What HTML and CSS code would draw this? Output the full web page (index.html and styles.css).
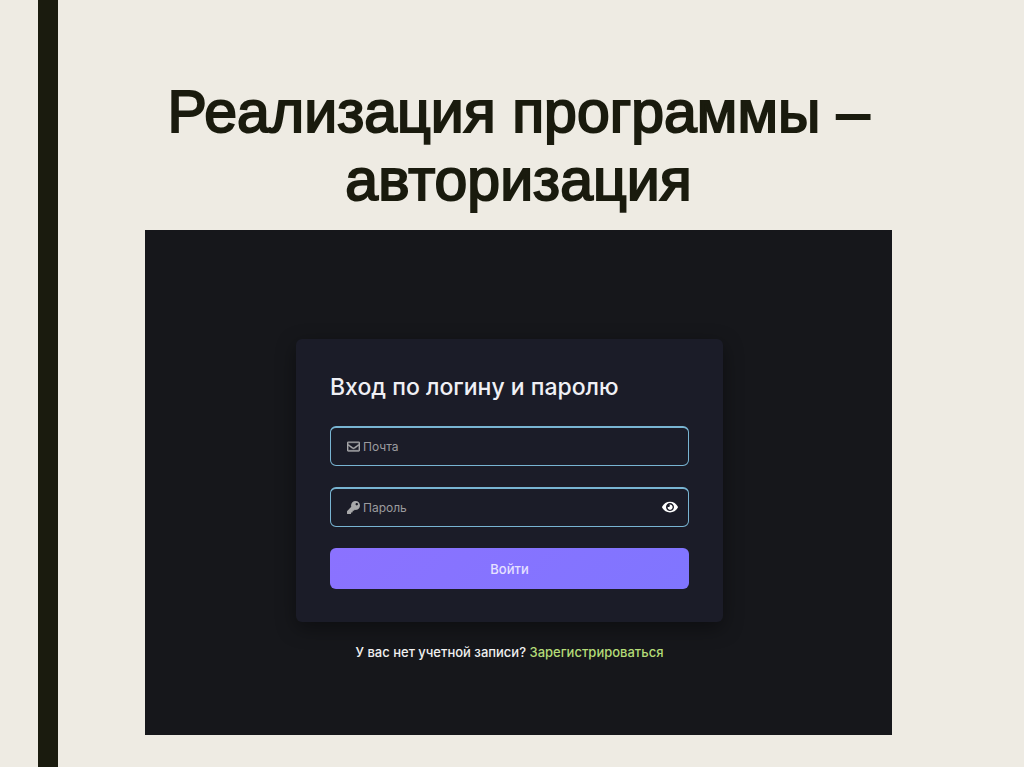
FILE: index.html
```html
<!DOCTYPE html>
<html lang="ru">
<head>
    <meta charset="UTF-8">
    <meta name="viewport" content="width=device-width, initial-scale=1.0">
    <title>Реализация программы – авторизация</title>
    <link rel="stylesheet" href="styles.css">
</head>
<body>
    <div class="stripe"></div>
    <main class="slide">
        <h1 class="slide-title">Реализация программы – авторизация</h1>

        <section class="screen">
            <form class="card">
                <h2>Вход по логину и паролю</h2>

                <div class="field">
                    <label for="email" aria-label="Почта">
                        <svg class="icon" viewBox="0 0 512 512" fill="currentColor" stroke="currentColor" stroke-width="14">
                            <path d="M464 64H48C21 64 0 86 0 112v288c0 27 21 48 48 48h416c27 0 48-21 48-48V112c0-26-21-48-48-48zm0 48v41c-22 18-58 46-135 107-17 13-50 45-73 44-23 1-56-31-73-44C106 199 70 171 48 153v-41h416zM48 400V215c23 18 55 43 105 83 23 18 62 54 103 54 41 0 80-36 103-54 50-40 82-65 105-83v185H48z"/>
                        </svg>
                    </label>
                    <input type="email" id="email" placeholder="Почта">
                </div>

                <div class="field">
                    <label for="password" aria-label="Пароль">
                        <svg class="icon" viewBox="0 0 512 512" fill="currentColor">
                            <path d="M512 176c0 97-79 176-176 176-11 0-22-1-32-3l-24 27c-5 5-11 8-18 8h-38v40c0 13-11 24-24 24h-40v40c0 13-11 24-24 24H24c-13 0-24-11-24-24v-78c0-6 3-12 7-17l162-162c-6-17-9-36-9-55C160 79 239 0 336 0c97 0 176 79 176 176zm-176-48c0 27 21 48 48 48s48-21 48-48-21-48-48-48-48 21-48 48z"/>
                        </svg>
                    </label>
                    <input type="password" id="password" placeholder="Пароль">
                    <button type="button" class="toggle" aria-label="Показать пароль">
                        <svg viewBox="0 0 576 512" fill="currentColor">
                            <path fill-rule="evenodd" d="M572 241C518 136 411 64 288 64S58 136 4 241c-5 9-5 21 0 30 54 105 161 177 284 177s230-72 284-177c5-9 5-21 0-30zM288 400c-80 0-144-64-144-144s64-144 144-144 144 64 144 144-64 144-144 144z"/>
                            <path d="M288 160c-9 0-17 1-25 4 22 16 25 46 10 67s-46 25-67 10c-18 67 38 111 82 111 53 0 96-43 96-96s-43-96-96-96z"/>
                        </svg>
                    </button>
                </div>

                <button type="submit" class="btn">Войти</button>
            </form>

            <p class="signup">У вас нет учетной записи? <a href="#">Зарегистрироваться</a></p>
        </section>
    </main>
</body>
</html>
```
FILE: styles.css
```css
* {
    margin: 0;
    padding: 0;
    box-sizing: border-box;
}

body {
    display: flex;
    min-height: 100vh;
    background: #eeebe3;
    font-family: Inter, sans-serif;
}

.stripe {
    width: 20px;
    margin-left: 38px;
    background: #1a1b0e;
    flex-shrink: 0;
}

.slide {
    flex: 1;
    padding: 78px 132px 32px 87px;
}

.slide-title {
    color: #1a1b0e;
    font-family: "Liberation Sans", Arial, sans-serif;
    font-size: 59px;
    font-weight: 400;
    line-height: 68px;
    text-align: center;
    -webkit-text-stroke: 2px #1a1b0e;
    margin-bottom: 16px;
}

.screen {
    display: flex;
    flex-direction: column;
    align-items: center;
    padding: 109px 18px 73px 0;
    background: #16171b;
}

.card {
    width: 100%;
    max-width: 427px;
    padding: 34px 34px 33px;
    background: #1b1c28;
    border-radius: 6px;
    box-shadow: 0 6px 20px rgba(0, 0, 0, 0.4);
}

.card h2 {
    color: #f0f0f5;
    font-size: 23px;
    font-weight: 500;
    line-height: 28px;
    margin-bottom: 25px;
}

.field {
    display: flex;
    align-items: center;
    gap: 3px;
    height: 40px;
    padding: 0 10px 0 16px;
    margin-bottom: 21px;
    border: 1px solid #78b4d2;
    border-top-width: 2px;
    border-radius: 6px;
    color: #a8a8aa;
}

.icon {
    display: block;
    width: 13px;
    height: 13px;
}

.field input {
    flex: 1;
    min-width: 0;
    border: none;
    outline: none;
    background: transparent;
    color: #f0f0f5;
    font-family: inherit;
    font-size: 12px;
}

.field input::placeholder {
    color: #9b9b9f;
    opacity: 1;
}

.toggle {
    width: 16px;
    border: none;
    background: none;
    color: #fff;
    cursor: pointer;
}

.toggle svg {
    display: block;
    width: 100%;
}

.btn {
    display: block;
    width: 100%;
    height: 41px;
    border: none;
    border-radius: 6px;
    background: linear-gradient(135deg, #8b72ff 0%, #8075ff 100%);
    color: #e6e1ff;
    font-family: inherit;
    font-size: 13px;
    font-weight: 500;
    cursor: pointer;
}

.signup {
    margin-top: 20px;
    color: #f0f0f0;
    font-size: 13px;
    font-weight: 500;
    line-height: 20px;
}

.signup a {
    color: #b4dc78;
    text-decoration: none;
}
```
